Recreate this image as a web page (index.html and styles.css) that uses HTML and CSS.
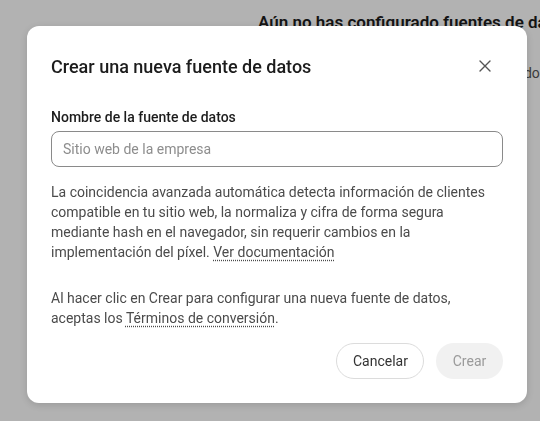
FILE: index.html
```html
<!DOCTYPE html>
<html lang="es">
<head>
    <meta charset="UTF-8">
    <meta name="viewport" content="width=device-width, initial-scale=1.0">
    <title>Fuentes de datos</title>
    <link rel="stylesheet" href="styles.css">
</head>
<body>

<div class="page">
    <div class="empty-state">
        <h2>Aún no has configurado fuentes de datos</h2>
        <p>Aquí verás las fuentes que hayas configurado.</p>
    </div>
</div>

<div class="overlay">
    <div class="dialog" role="dialog" aria-labelledby="dialogTitle">
        <div class="dialog-header">
            <h1 id="dialogTitle">Crear una nueva fuente de datos</h1>
            <button class="close-btn" aria-label="Cerrar">
                <svg width="14" height="14" viewBox="0 0 14 14">
                    <path d="M2 2 L12 12 M12 2 L2 12" stroke="#555" stroke-width="1.4" stroke-linecap="round" fill="none"/>
                </svg>
            </button>
        </div>

        <label class="field-label" for="sourceName">Nombre de la fuente de datos</label>
        <input class="field-input" type="text" id="sourceName" placeholder="Sitio web de la empresa">

        <p class="info">
            La coincidencia avanzada automática detecta información de clientes
            compatible en tu sitio web, la normaliza y cifra de forma segura
            mediante hash en el navegador, sin requerir cambios en la
            implementación del píxel. <a href="#">Ver documentación</a>
        </p>

        <p class="info terms">
            Al hacer clic en Crear para configurar una nueva fuente de datos,
            aceptas los <a href="#">Términos de conversión</a>.
        </p>

        <div class="actions">
            <button class="btn btn-outline">Cancelar</button>
            <button class="btn btn-disabled" disabled>Crear</button>
        </div>
    </div>
</div>

</body>
</html>
```

FILE: styles.css
```css
body {
    font-family: Roboto, "Liberation Sans", sans-serif;
    background-color: white;
    color: #1c1c1c;
    margin: 0;
    height: 100vh;
    overflow: hidden;
}
.page {
    padding: 12px 0 0 258px;
    overflow: hidden;
}
.empty-state h2 {
    font-size: 17px;
    font-weight: 600;
    margin: 0 0 33px;
    white-space: nowrap;
}
.empty-state p {
    font-size: 14px;
    color: #555;
    margin: 0;
    white-space: nowrap;
}
.overlay {
    position: fixed;
    inset: 0;
    background-color: rgba(0, 0, 0, 0.3);
    padding: 26px 0 0 27px;
}
.dialog {
    background-color: white;
    border-radius: 12px;
    width: 500px;
    height: 377px;
    box-sizing: border-box;
    padding: 24px;
    box-shadow: 0px 2px 8px rgba(0, 0, 0, 0.15);
}
.dialog-header {
    display: flex;
    justify-content: space-between;
    align-items: center;
    height: 32px;
    margin-bottom: 26px;
}
.dialog-header h1 {
    font-size: 18px;
    font-weight: 500;
    margin: 0;
}
.close-btn {
    background: none;
    border: none;
    padding: 6px;
    margin-right: 5px;
    cursor: pointer;
    display: flex;
}
.field-label {
    display: block;
    font-size: 14px;
    font-weight: 500;
    line-height: 18px;
    margin-bottom: 5px;
}
.field-input {
    display: block;
    width: 100%;
    box-sizing: border-box;
    height: 36px;
    padding: 0 11px;
    border: 1px solid #8a8a8a;
    border-radius: 8px;
    font-family: inherit;
    font-size: 14px;
    color: #1c1c1c;
    outline: none;
}
.field-input::placeholder {
    color: #8d8d8d;
}
.info {
    font-size: 14px;
    line-height: 20px;
    color: #4b4b4b;
    margin: 15px 0 0;
}
.info.terms {
    margin-top: 26px;
}
.info a {
    color: inherit;
    text-decoration: underline dotted;
    text-underline-offset: 3px;
}
.actions {
    display: flex;
    justify-content: flex-end;
    gap: 12px;
    margin-top: 15px;
}
.btn {
    height: 36px;
    border-radius: 18px;
    font-family: inherit;
    font-size: 14px;
    padding: 0 16px;
    cursor: pointer;
}
.btn-outline {
    background-color: white;
    border: 1px solid #dcdcdc;
    color: #333;
    width: 88px;
}
.btn-disabled {
    background-color: #f1f1f1;
    border: none;
    color: #9a9a9a;
    width: 67px;
    cursor: default;
}
```
